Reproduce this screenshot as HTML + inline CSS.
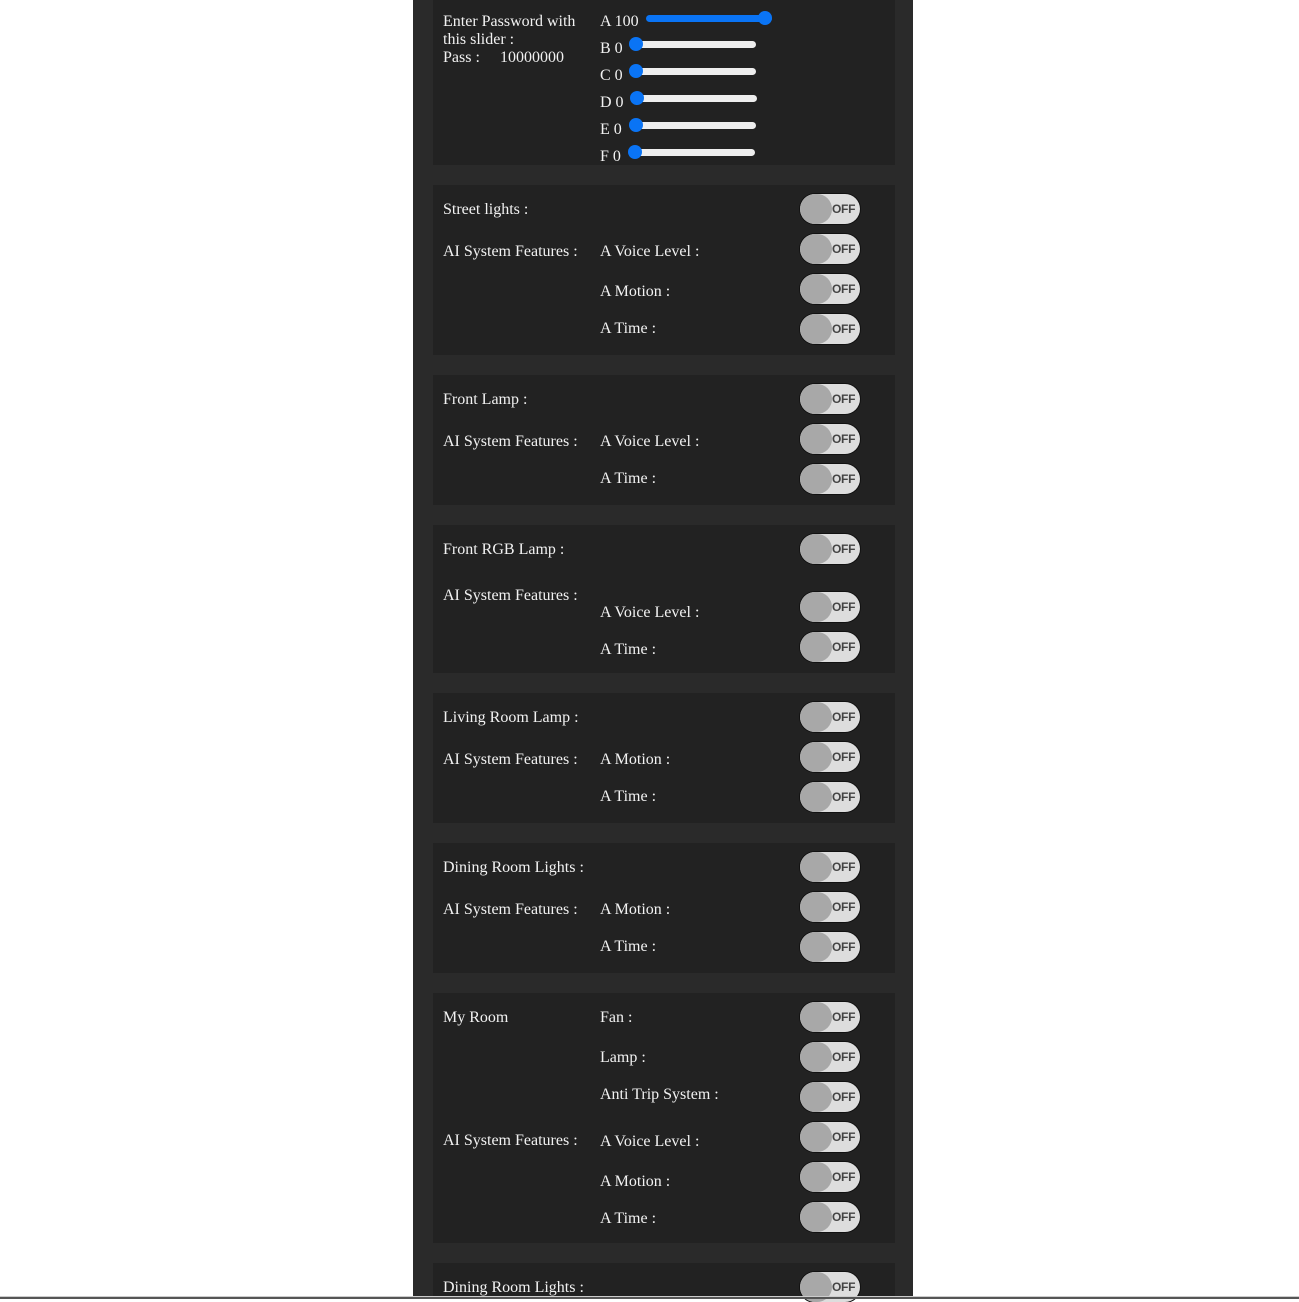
<!DOCTYPE html>
<html><head><meta charset="utf-8"><style>
html,body{margin:0;padding:0}
body{width:1299px;height:1299px;background:#fff;position:relative;overflow:hidden;font-family:"Liberation Serif",serif;}
.col{position:absolute;left:413px;top:0;width:500px;height:1299px;background:#2a2a2a}
.card{position:absolute;left:433px;width:462px;background:#222}
.t{position:absolute;color:#f2f2f2;font-size:16px;line-height:20px;white-space:nowrap;margin-top:2px}
.tg{position:absolute;left:800px;width:60px;height:30px;border-radius:15px;background:#ddd;box-shadow:0 0 0 1px #111}
.tg::before{content:"";position:absolute;left:0;top:0;width:32px;height:30px;border-radius:15px;background:#a8a8a8}
.tg::after{content:"OFF";position:absolute;left:32px;top:0;line-height:30px;font:600 12px/30px "Liberation Sans",sans-serif;color:#444;letter-spacing:-0.3px}
.tr{position:absolute;height:7px;border-radius:4px;background:#eee}
.th{position:absolute;width:14px;height:14px;border-radius:7px;background:#0a74f5}
.line{position:absolute;left:0;top:1296px;width:1299px;height:2px;background:#555;border-top:1px solid #ccc}
</style></head><body>
<div class="col"></div>
<div class="card" style="top:0;height:165px"></div>
<div class="card" style="top:185px;height:170px"></div>
<div class="card" style="top:375px;height:130px"></div>
<div class="card" style="top:525px;height:148px"></div>
<div class="card" style="top:693px;height:130px"></div>
<div class="card" style="top:843px;height:130px"></div>
<div class="card" style="top:993px;height:250px"></div>
<div class="card" style="top:1263px;height:33px"></div>

<div class="t" style="left:443px;top:10px">Enter Password with</div>
<div class="t" style="left:443px;top:28px">this slider :</div>
<div class="t" style="left:443px;top:46px">Pass :</div>
<div class="t" style="left:500px;top:46px">10000000</div>
<div class="t" style="left:600px;top:10px">A 100</div>
<div class="t" style="left:600px;top:37px">B 0</div>
<div class="t" style="left:600px;top:64px">C 0</div>
<div class="t" style="left:600px;top:91px">D 0</div>
<div class="t" style="left:600px;top:118px">E 0</div>
<div class="t" style="left:600px;top:145px">F 0</div>

<div class="tr" style="left:646px;top:15px;width:126px;background:#0a74f5"></div><div class="th" style="left:758px;top:11px"></div>
<div class="tr" style="left:630px;top:41px;width:126px"></div><div class="th" style="left:629px;top:37px"></div>
<div class="tr" style="left:630px;top:68px;width:126px"></div><div class="th" style="left:629px;top:64px"></div>
<div class="tr" style="left:631px;top:95px;width:126px"></div><div class="th" style="left:630px;top:91px"></div>
<div class="tr" style="left:630px;top:122px;width:126px"></div><div class="th" style="left:629px;top:118px"></div>
<div class="tr" style="left:629px;top:149px;width:126px"></div><div class="th" style="left:628px;top:145px"></div>

<div class="t" style="left:443px;top:198px">Street lights :</div>
<div class="t" style="left:443px;top:240px">AI System Features :</div>
<div class="t" style="left:600px;top:240px">A Voice Level :</div>
<div class="t" style="left:600px;top:280px">A Motion :</div>
<div class="t" style="left:600px;top:317px">A Time :</div>
<div class="tg" style="top:194px"></div><div class="tg" style="top:234px"></div><div class="tg" style="top:274px"></div><div class="tg" style="top:314px"></div>

<div class="t" style="left:443px;top:388px">Front Lamp :</div>
<div class="t" style="left:443px;top:430px">AI System Features :</div>
<div class="t" style="left:600px;top:430px">A Voice Level :</div>
<div class="t" style="left:600px;top:467px">A Time :</div>
<div class="tg" style="top:384px"></div><div class="tg" style="top:424px"></div><div class="tg" style="top:464px"></div>

<div class="t" style="left:443px;top:538px">Front RGB Lamp :</div>
<div class="t" style="left:443px;top:584px">AI System Features :</div>
<div class="t" style="left:600px;top:601px">A Voice Level :</div>
<div class="t" style="left:600px;top:638px">A Time :</div>
<div class="tg" style="top:534px"></div><div class="tg" style="top:592px"></div><div class="tg" style="top:632px"></div>

<div class="t" style="left:443px;top:706px">Living Room Lamp :</div>
<div class="t" style="left:443px;top:748px">AI System Features :</div>
<div class="t" style="left:600px;top:748px">A Motion :</div>
<div class="t" style="left:600px;top:785px">A Time :</div>
<div class="tg" style="top:702px"></div><div class="tg" style="top:742px"></div><div class="tg" style="top:782px"></div>

<div class="t" style="left:443px;top:856px">Dining Room Lights :</div>
<div class="t" style="left:443px;top:898px">AI System Features :</div>
<div class="t" style="left:600px;top:898px">A Motion :</div>
<div class="t" style="left:600px;top:935px">A Time :</div>
<div class="tg" style="top:852px"></div><div class="tg" style="top:892px"></div><div class="tg" style="top:932px"></div>

<div class="t" style="left:443px;top:1006px">My Room</div>
<div class="t" style="left:600px;top:1006px">Fan :</div>
<div class="t" style="left:600px;top:1046px">Lamp :</div>
<div class="t" style="left:600px;top:1083px">Anti Trip System :</div>
<div class="t" style="left:443px;top:1129px">AI System Features :</div>
<div class="t" style="left:600px;top:1130px">A Voice Level :</div>
<div class="t" style="left:600px;top:1170px">A Motion :</div>
<div class="t" style="left:600px;top:1207px">A Time :</div>
<div class="tg" style="top:1002px"></div><div class="tg" style="top:1042px"></div><div class="tg" style="top:1082px"></div><div class="tg" style="top:1122px"></div><div class="tg" style="top:1162px"></div><div class="tg" style="top:1202px"></div>

<div class="t" style="left:443px;top:1276px">Dining Room Lights :</div>
<div class="tg" style="top:1272px"></div>
<div class="line"></div>
</body></html>
